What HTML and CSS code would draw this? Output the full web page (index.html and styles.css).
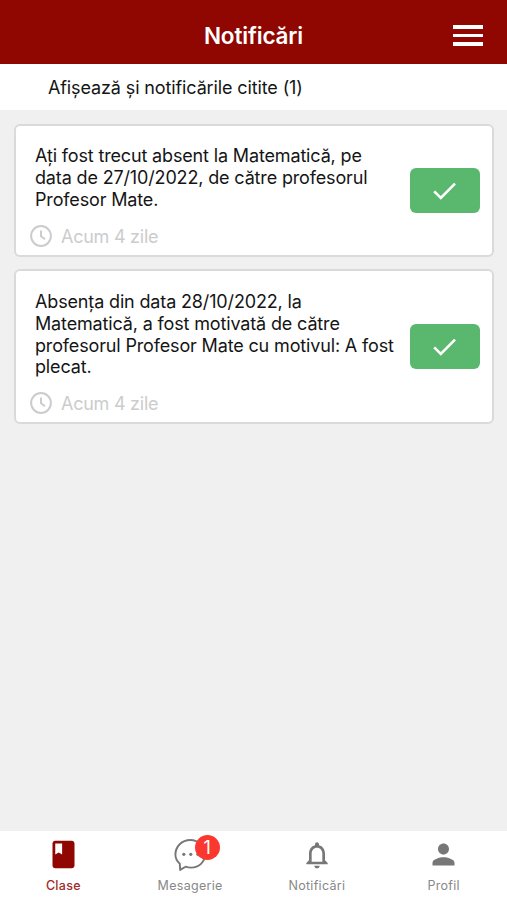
FILE: index.html
```html
<!DOCTYPE html>
<html lang="ro">
<head>
<meta charset="utf-8">
<meta name="viewport" content="width=device-width, initial-scale=1">
<title>Notificări</title>
<link rel="stylesheet" href="styles.css">
</head>
<body>
<div class="app">
  <header class="header">
    <h1 class="title">Notificări</h1>
    <button class="menu" aria-label="Meniu"><span></span><span></span><span></span></button>
  </header>
  <div class="filter"><span>Afișează și notificările citite (1)</span></div>
  <main class="list">
    <article class="card">
      <div class="card-body">
        <p class="message">Ați fost trecut absent la Matematică, pe<br>data de 27/10/2022, de către profesorul<br>Profesor Mate.</p>
        <div class="time">
          <svg class="clock" viewBox="0 0 22 22"><circle cx="11" cy="11" r="9.9"/><path d="M11 5.5V11.2L15 14.3"/></svg>
          <span>Acum 4 zile</span>
        </div>
      </div>
      <button class="confirm" aria-label="Citit"><svg viewBox="0 0 24 18"><path d="M1.2 9.3 7.8 15.9 22 1.7"/></svg></button>
    </article>
    <article class="card">
      <div class="card-body">
        <p class="message">Absența din data 28/10/2022, la<br>Matematică, a fost motivată de către<br>profesorul Profesor Mate cu motivul: A fost<br>plecat.</p>
        <div class="time">
          <svg class="clock" viewBox="0 0 22 22"><circle cx="11" cy="11" r="9.9"/><path d="M11 5.5V11.2L15 14.3"/></svg>
          <span>Acum 4 zile</span>
        </div>
      </div>
      <button class="confirm" aria-label="Citit"><svg viewBox="0 0 24 18"><path d="M1.2 9.3 7.8 15.9 22 1.7"/></svg></button>
    </article>
  </main>
  <nav class="tabs">
    <a class="tab active">
      <span class="icon"><svg width="33" height="33" viewBox="0 0 24 24"><path fill="currentColor" d="M18 2H6c-1.100 0-2 .9-2 2v16c0 1.100.9 2 2 2h12c1.100 0 2-.9 2-2V4c0-1.100-.9-2-2-2zM6 4h5v8l-2.500-1.500L6 12V4z"/></svg></span>
      <span class="label">Clase</span>
    </a>
    <a class="tab">
      <span class="icon"><svg width="34" height="34" viewBox="0 0 34 34"><path fill="none" stroke="currentColor" stroke-width="1.900" stroke-linejoin="round" d="M7.200 31.900 6.800 25.800C3.900 23.200 2.400 20.300 2.400 16.800 2.400 8.500 8.900 2 17.300 2S32 8.500 32 16.300 25.900 29.600 18.200 29.600c-2.100 0-4-.3-5.600-.9Z"/><g fill="currentColor"><circle cx="10.800" cy="16.300" r="1.600"/><circle cx="17.800" cy="16.300" r="1.600"/><circle cx="24.900" cy="16.300" r="1.600"/></g></svg><b class="badge">1</b></span>
      <span class="label">Mesagerie</span>
    </a>
    <a class="tab">
      <span class="icon"><svg width="32" height="32" viewBox="0 0 24 24"><path fill="currentColor" d="M12 22c1.100 0 2-.9 2-2h-4c0 1.100.9 2 2 2zm6-6v-5c0-3.070-1.630-5.640-4.500-6.320V4c0-.83-.67-1.500-1.500-1.500s-1.500.67-1.500 1.500v.68C7.640 5.360 6 7.920 6 11v5l-2 2v1h16v-1l-2-2zm-2 1H8v-6c0-2.480 1.510-4.500 4-4.500s4 2.020 4 4.500v6z"/></svg></span>
      <span class="label">Notificări</span>
    </a>
    <a class="tab">
      <span class="icon"><svg width="33" height="33" viewBox="0 0 24 24"><path fill="currentColor" d="M12 12c2.210 0 4-1.790 4-4s-1.790-4-4-4-4 1.790-4 4 1.790 4 4 4zm0 2c-2.670 0-8 1.340-8 4v2h16v-2c0-2.660-5.330-4-8-4z"/></svg></span>
      <span class="label">Profil</span>
    </a>
  </nav>
</div>
</body>
</html>
```
FILE: styles.css
```css
* { box-sizing: border-box; }
body {
  margin: 0;
  font-family: Inter, "Liberation Sans", sans-serif;
  color: #151515;
  background: #f0f0f0;
}
button { border: 0; padding: 0; }
.app { height: 900px; display: flex; flex-direction: column; overflow: hidden; }
.header {
  height: 64px;
  flex: none;
  display: grid;
  grid-template-columns: 1fr auto 1fr;
  align-items: center;
  padding: 7px 24px 0;
  background: #900600;
  color: #fff;
}
.title {
  grid-column: 2;
  margin: 0;
  font-size: 22.500px;
  line-height: 28px;
  font-weight: 600;
  letter-spacing: -0.15px;
}
.menu {
  justify-self: end;
  width: 30px;
  display: grid;
  gap: 5px;
  background: none;
}
.menu span { height: 3.400px; background: #fff; }
.filter {
  height: 46px;
  flex: none;
  display: flex;
  align-items: center;
  padding-left: 48px;
  background: #fff;
  font-size: 18px;
  letter-spacing: -0.12px;
}
.list { flex: 1; padding: 14px 13px 0 14px; }
.card {
  display: flex;
  align-items: center;
  justify-content: space-between;
  height: 133px;
  padding: 0 13px 0 15px;
  border: 2px solid #dadada;
  border-radius: 6px;
  background: #fff;
}
.card + .card { height: 155px; margin-top: 12px; }
.card-body { align-self: flex-start; padding-top: 19px; }
.card + .card .card-body { padding-top: 20px; }
.message {
  margin: 0 0 0 4px;
  font-size: 18px;
  line-height: 21.800px;
  letter-spacing: -0.15px;
  white-space: nowrap;
}
.time {
  display: flex;
  align-items: center;
  gap: 9px;
  height: 22px;
  margin: 15px 0 0 -1px;
  color: #ccc;
  font-size: 18px;
  letter-spacing: -0.25px;
}
.card + .card .time { margin-top: 14px; }
.clock { width: 22px; height: 22px; fill: none; stroke: currentColor; stroke-width: 2; }
.confirm {
  flex: none;
  display: grid;
  place-items: center;
  width: 70px;
  height: 45px;
  margin-right: -1px;
  border-radius: 6px;
  background: #5ab86e;
}
.confirm svg { width: 24px; height: 18px; fill: none; stroke: #fff; stroke-width: 2.600; }
.tabs {
  height: 69px;
  flex: none;
  display: grid;
  grid-template-columns: repeat(4, 1fr);
  background: #fff;
  color: #777;
}
.tab { display: flex; flex-direction: column; align-items: center; padding-top: 7px; }
.icon { position: relative; display: grid; place-items: center; height: 33px; }
.label { margin-top: 7px; font-size: 12.500px; line-height: 16px; letter-spacing: 0.3px; color: #888; }
.active { color: #900600; }
.active .label { color: #a32a2a; font-weight: 500; }
.badge {
  position: absolute;
  left: 21.500px;
  top: -3.500px;
  width: 25px;
  height: 25px;
  border-radius: 50%;
  background: #fb3830;
  color: #fff;
  font-size: 18px;
  line-height: 25px;
  font-weight: 400;
  text-align: center;
}
```
